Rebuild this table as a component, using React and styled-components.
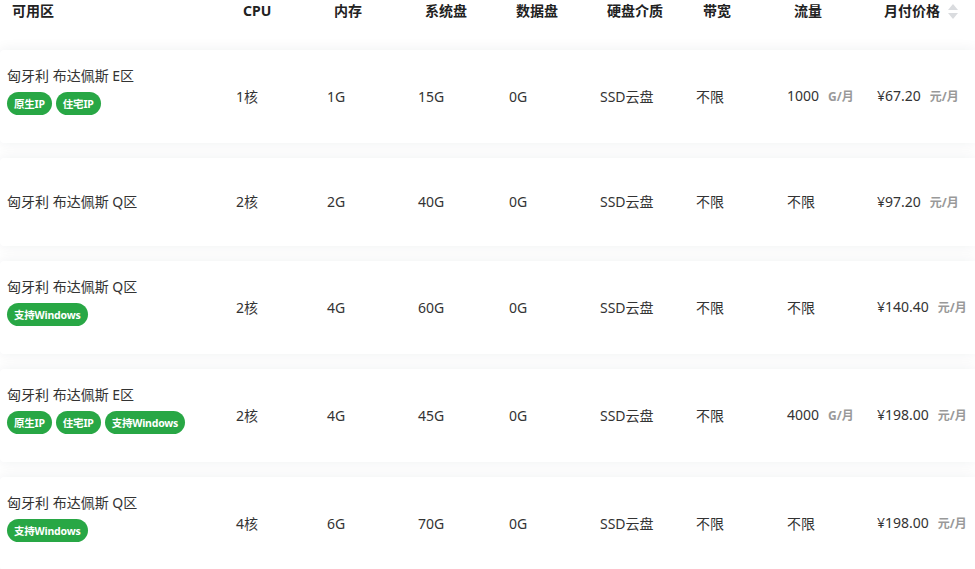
import React from 'react'
import styled, { createGlobalStyle } from 'styled-components'

const GlobalStyle = createGlobalStyle`
  html, body {
    margin: 0;
    padding: 0;
    background: #fff;
    font-family: "Noto Sans", "Noto Sans CJK SC", sans-serif;
    color: #333;
  }
`

const cols = '228px 91px 91px 91px 91px 96px 91px 90px 1fr'

const plans = [
  { zone: '匈牙利 布达佩斯 E区', tags: ['原生IP', '住宅IP'], cpu: '1核', mem: '1G', sys: '15G', data: '0G', disk: 'SSD云盘', bw: '不限', traffic: '1000', price: '¥67.20' },
  { zone: '匈牙利 布达佩斯 Q区', tags: [], cpu: '2核', mem: '2G', sys: '40G', data: '0G', disk: 'SSD云盘', bw: '不限', traffic: null, price: '¥97.20' },
  { zone: '匈牙利 布达佩斯 Q区', tags: ['支持Windows'], cpu: '2核', mem: '4G', sys: '60G', data: '0G', disk: 'SSD云盘', bw: '不限', traffic: null, price: '¥140.40' },
  { zone: '匈牙利 布达佩斯 E区', tags: ['原生IP', '住宅IP', '支持Windows'], cpu: '2核', mem: '4G', sys: '45G', data: '0G', disk: 'SSD云盘', bw: '不限', traffic: '4000', price: '¥198.00' },
  { zone: '匈牙利 布达佩斯 Q区', tags: ['支持Windows'], cpu: '4核', mem: '6G', sys: '70G', data: '0G', disk: 'SSD云盘', bw: '不限', traffic: null, price: '¥198.00' },
]

const Table = styled.div`
  width: 975px;
  overflow: hidden;
`

const Head = styled.div`
  display: grid;
  grid-template-columns: ${cols};
  padding-bottom: 28px;
`

const HeadCell = styled.div`
  padding-left: ${(p) => (p.$first ? '12px' : '15px')};
  font-size: 14px;
  font-weight: 700;
  line-height: 22px;
  color: #222;
  display: flex;
  align-items: center;
  gap: 8px;
`

const SortIcon = styled.span`
  display: inline-flex;
  flex-direction: column;
  gap: 3px;
  span {
    width: 0;
    height: 0;
    border-left: 5px solid transparent;
    border-right: 5px solid transparent;
  }
  span:first-child {
    border-bottom: 6px solid #dadcdf;
  }
  span:last-child {
    border-top: 6px solid #dadcdf;
  }
`

const Rows = styled.div`
  display: flex;
  flex-direction: column;
  gap: 15px;
`

const Row = styled.div`
  display: grid;
  grid-template-columns: ${cols};
  align-items: center;
  min-height: 88px;
  background: #fff;
  border-radius: 4px 0 0 4px;
  box-shadow: 0 0 14px rgba(30, 40, 60, 0.07);
`

const Cell = styled.div`
  padding-left: 8px;
  font-size: 14px;
  line-height: 20px;
  white-space: nowrap;
`

const ZoneCell = styled(Cell)`
  padding-left: 7px;
  padding-top: 16px;
  padding-bottom: ${(p) => (p.$tagged ? '28px' : '16px')};
`

const Tags = styled.div`
  display: flex;
  gap: 4px;
  margin-top: 6px;
`

const Tag = styled.span`
  display: inline-flex;
  align-items: center;
  height: 23px;
  padding: 0 7px;
  border-radius: 12px;
  background: #28a745;
  color: #fff;
  font-size: 10.5px;
  font-weight: 700;
  letter-spacing: -0.2px;
`

const Unit = styled.span`
  margin-left: 9px;
  font-size: 12px;
  font-weight: 700;
  color: #999;
`

const headers = ['可用区', 'CPU', '内存', '系统盘', '数据盘', '硬盘介质', '带宽', '流量']

export default function App() {
  return (
    <>
      <GlobalStyle />
      <Table>
        <Head>
          {headers.map((h, i) => (
            <HeadCell key={h} $first={i === 0}>{h}</HeadCell>
          ))}
          <HeadCell>
            月付价格
            <SortIcon>
              <span />
              <span />
            </SortIcon>
          </HeadCell>
        </Head>
        <Rows>
          {plans.map((p, i) => (
            <Row key={i}>
              <ZoneCell $tagged={p.tags.length > 0}>
                <div>{p.zone}</div>
                {p.tags.length > 0 && (
                  <Tags>
                    {p.tags.map((t) => (
                      <Tag key={t}>{t}</Tag>
                    ))}
                  </Tags>
                )}
              </ZoneCell>
              <Cell>{p.cpu}</Cell>
              <Cell>{p.mem}</Cell>
              <Cell>{p.sys}</Cell>
              <Cell>{p.data}</Cell>
              <Cell>{p.disk}</Cell>
              <Cell>{p.bw}</Cell>
              <Cell>
                {p.traffic ? (
                  <>
                    {p.traffic}
                    <Unit>G/月</Unit>
                  </>
                ) : (
                  '不限'
                )}
              </Cell>
              <Cell>
                {p.price}
                <Unit>元/月</Unit>
              </Cell>
            </Row>
          ))}
        </Rows>
      </Table>
    </>
  )
}
